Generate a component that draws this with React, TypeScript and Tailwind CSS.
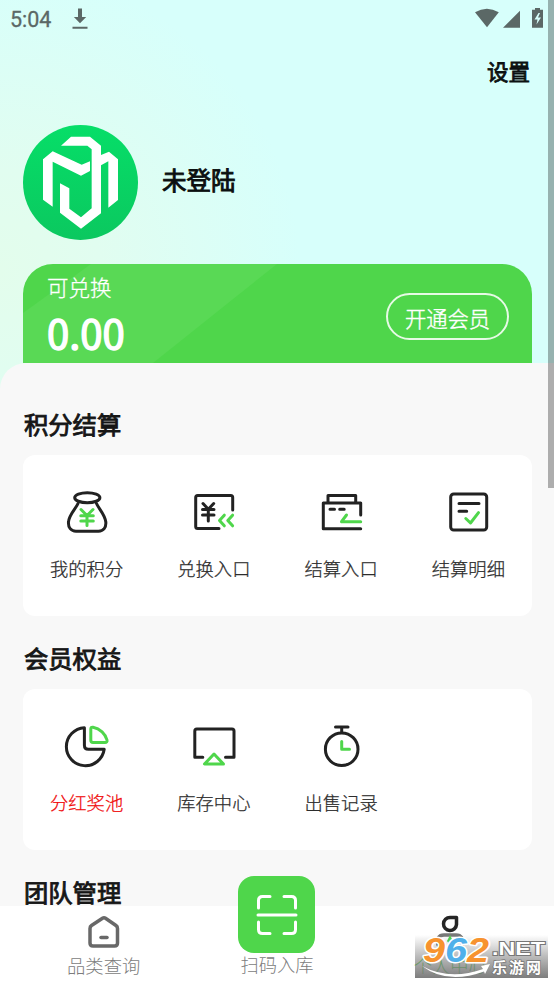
import type { ReactNode } from "react";

const DARK = "#222222";
const GREEN = "#4fd64b";

type Entry = {
  label: string;
  icon: ReactNode;
  highlight?: boolean;
};

function Icon({ children }: { children: ReactNode }) {
  return (
    <svg
      viewBox="0 0 48 48"
      fill="none"
      stroke={DARK}
      strokeWidth="3"
      strokeLinecap="round"
      strokeLinejoin="round"
      className="size-12"
    >
      {children}
    </svg>
  );
}

const pointEntries: Entry[] = [
  {
    label: "我的积分",
    icon: (
      <Icon>
        <ellipse cx="24.3" cy="9.7" rx="12.6" ry="5" />
        <path d="M15 15.5C13 20.5 6 26.5 5.5 34C5 39.5 8 43.2 13 43.2H35.5C40.5 43.2 43.3 39.5 42.8 34C42 26.5 35.5 20.5 33.5 15.5" />
        <path
          stroke={GREEN}
          d="M18 21.5L24 27.5L30 21.5M24 27.5V37.5M17.8 27.7H30.3M17.8 33H30.3"
        />
      </Icon>
    ),
  },
  {
    label: "兑换入口",
    icon: (
      <Icon>
        <path d="M42.7 22V9.5Q42.7 7.5 40.7 7.5H7.7Q5.7 7.5 5.7 9.5V38.5Q5.7 40.5 7.7 40.5H29" />
        <path d="M13 15.5L18.3 21.2L23.7 15.5M18.3 21.2V33M12.5 21.5H24M12.5 27H24" />
        <path
          stroke={GREEN}
          d="M34.3 27.2L29.5 32.5L34.3 37.8M42.6 27.2L37.8 32.5L42.6 37.8"
        />
      </Icon>
    ),
  },
  {
    label: "结算入口",
    icon: (
      <Icon>
        <path d="M11 14.5V7.4H38.7V14.5M43.7 27V15H6.3V40.7H43.7M13 21.2H17.5M22.7 21.2H27.2" />
        <path stroke={GREEN} d="M29.5 27L24.5 33.7H43.7" />
      </Icon>
    ),
  },
  {
    label: "结算明细",
    icon: (
      <Icon>
        <rect x="6.7" y="6" width="36" height="36" rx="3" />
        <path d="M15 15.4H35M15 23.3H22.7" />
        <path stroke={GREEN} d="M21.8 30.5L26.5 35L34.5 24.7" />
      </Icon>
    ),
  },
];

const memberEntries: Entry[] = [
  {
    label: "分红奖池",
    highlight: true,
    icon: (
      <Icon>
        <path d="M21.4 5.7A19 19 0 1 0 41.2 27.3H25.4Q21.4 27.3 21.4 23.3Z" />
        <path
          stroke={GREEN}
          d="M27.8 7Q27.8 4.8 30 5.2C37 6.5 42.5 12 44 18Q44.5 20.5 42 20.5H30Q27.8 20.5 27.8 18.3Z"
        />
      </Icon>
    ),
  },
  {
    label: "库存中心",
    icon: (
      <Icon>
        <path d="M12.8 35.2H4.8V9Q4.8 7 6.8 7H42Q44 7 44 9V35.2H35.5" />
        <path stroke={GREEN} d="M24 32L14.5 42H33.5Z" />
      </Icon>
    ),
  },
  {
    label: "出售记录",
    icon: (
      <Icon>
        <circle cx="24.7" cy="27.2" r="16.3" />
        <path d="M18.5 5H31M24.7 5V10.5" />
        <path stroke={GREEN} d="M24.7 19.5V27.2H32.5" />
      </Icon>
    ),
  },
];

function Section({ title, entries }: { title: string; entries: Entry[] }) {
  return (
    <section>
      <h2 className="h-[92px] pl-px pt-[43px] text-[24.3px] font-normal leading-9 text-[#161616] [-webkit-text-stroke:0.9px_#161616]">
        {title}
      </h2>
      <div className="grid h-[161px] grid-cols-4 rounded-xl bg-white">
        {entries.map((entry) => (
          <button
            key={entry.label}
            type="button"
            className="flex flex-col items-center pt-[33px]"
          >
            {entry.icon}
            <span
              className={`mt-[18px] whitespace-nowrap text-[18.3px] font-light leading-7 [-webkit-text-stroke:0.25px_currentColor] ${
                entry.highlight ? "text-[#f00a0a]" : "text-[#2c2c2c]"
              }`}
            >
              {entry.label}
            </span>
          </button>
        ))}
      </div>
    </section>
  );
}

function StatusBar() {
  return (
    <div className="flex h-[38px] items-center pl-[10px] pr-[9px] text-[#5b6866]">
      <span className="pt-[2px] font-['Roboto'] text-[21.5px] [-webkit-text-stroke:0.3px_#5b6866]">
        5:04
      </span>
      <svg viewBox="0 0 16 22" fill="currentColor" className="ml-[21px] h-[22px] w-4">
        <path d="M6 .5h4v8.500h4.200L8 15.200 1.900 9H6zM.5 18.700h15v2H.5z" />
      </svg>
      <svg
        viewBox="0 0 70 22"
        fill="currentColor"
        className="ml-auto h-[22px] w-[70px]"
      >
        <path d="M0 4.300Q11.800-3 23.800 4.300L12 19.200z" />
        <path d="M45 2.800V19.700H28z" />
        <path
          d="M60 0h5v1.800h3V19.700H57V1.800h3zM63.500 5L59.500 11.500h3l-1 5 4.500-7h-3l2-4.500z"
          fillRule="evenodd"
        />
      </svg>
    </div>
  );
}

function Avatar() {
  return (
    <svg viewBox="69 43 345 345" className="size-[115px]">
      <defs>
        <linearGradient id="avatar" x1="0" y1="0" x2="0" y2="1">
          <stop offset="0" stopColor="#06de68" />
          <stop offset="1" stopColor="#0bc85f" />
        </linearGradient>
      </defs>
      <circle cx="241.5" cy="215.5" r="172.5" fill="url(#avatar)" />
      <path
        fill="#fff"
        d="M183 105L213 78H270L303 105V133L327 123L354 146V268L325 291V152L303 164V308L243 354L180 306V218L208 233V294L243 320L275 293V116L262 105Z"
      />
      <path
        fill="#fff"
        d="M129 146L158 122L245 162L270 152V181L243 195L158 153V288L129 267Z"
      />
    </svg>
  );
}

function Balance() {
  return (
    <div className="relative ml-[23px] mr-[22px] flex h-[99px] overflow-hidden rounded-t-[30px] bg-[#4fd64b] text-white">
      <svg viewBox="0 0 509 99" className="absolute inset-0 h-[99px] w-[509px]">
        <path d="M0 49L68 0H254L130 99H0Z" fill="#59d955" />
      </svg>
      <div className="relative pl-6">
        <p className="mt-[7px] text-[21.5px] font-light leading-8 [-webkit-text-stroke:0.3px_white]">
          可兑换
        </p>
        <p className="mt-[4px] text-[40px] leading-[50px] [-webkit-text-stroke:1.4px_white]">
          0.00
        </p>
      </div>
      <button
        type="button"
        className="relative ml-auto mr-[23px] mt-[29px] h-[47px] w-[123px] rounded-full border-2 border-[#e6fae5] pt-px text-[21.3px] font-light leading-[43px] [-webkit-text-stroke:0.4px_white]"
      >
        开通会员
      </button>
    </div>
  );
}

function Watermark() {
  return (
    <svg
      viewBox="0 0 133 43"
      className="absolute bottom-[6px] left-[415px] h-[43px] w-[133px]"
    >
      <defs>
        <linearGradient id="shade" x1="0" y1="0" x2="0" y2="1">
          <stop offset="0" stopColor="#777" stopOpacity="0" />
          <stop offset="0.5" stopColor="#777" stopOpacity="0.5" />
          <stop offset="1" stopColor="#777" stopOpacity="0.95" />
        </linearGradient>
      </defs>
      <rect width="133" height="43" fill="url(#shade)" />
      <path
        d="M7 31Q35 46 68 34L66 31L75 29L70 39L69 36.500Q32 50 7 31Z"
        fill="#fff"
      />
      <text
        x="8"
        y="27"
        fontFamily="Liberation Sans, sans-serif"
        fontWeight="bold"
        fontStyle="italic"
        fontSize="35"
        textLength="66"
        lengthAdjust="spacingAndGlyphs"
        stroke="#fff"
        strokeWidth="3"
        strokeLinejoin="round"
        paintOrder="stroke"
      >
        <tspan fill="#f7932e">9</tspan>
        <tspan fill="#4fb0ea">6</tspan>
        <tspan fill="#f7932e">2</tspan>
      </text>
      <text
        x="77"
        y="20"
        fontFamily="Liberation Sans, sans-serif"
        fontWeight="bold"
        fontSize="19"
        textLength="53"
        lengthAdjust="spacingAndGlyphs"
        fill="#fff"
        stroke="#777"
        strokeWidth="2"
        paintOrder="stroke"
      >
        .NET
      </text>
      <text
        x="77"
        y="38"
        fontWeight="bold"
        fontSize="15"
        textLength="49"
        fill="#fff"
        stroke="#777"
        strokeWidth="1.5"
        paintOrder="stroke"
      >
        乐游网
      </text>
    </svg>
  );
}

function TabBar() {
  return (
    <nav className="relative z-10 grid h-[78px] grid-cols-3 bg-white px-[17px] text-[18.3px] font-light leading-7 text-[#7c7c7c]">
      <button type="button" className="flex flex-col items-center pt-[8px]">
        <svg
          viewBox="0 0 34 36"
          fill="none"
          stroke="#686868"
          strokeWidth="3.5"
          strokeLinecap="round"
          strokeLinejoin="round"
          className="h-9 w-[34px]"
        >
          <path d="M15.500 4.200Q17 3.200 18.500 4.200L29 11.500Q30.500 12.500 30.500 14.500V29Q30.500 32 27.500 32H6Q3 32 3 29V14.500Q3 12.500 4.500 11.500Z" />
          <path d="M14 23.500H20" />
        </svg>
        <span className="mt-px">品类查询</span>
      </button>
      <button type="button" className="-mt-[30px] flex flex-col items-center">
        <span className="flex size-[77px] shrink-0 items-center justify-center rounded-2xl bg-[#4fd64b]">
          <svg
            viewBox="0 0 42 42"
            fill="none"
            stroke="#fff"
            strokeWidth="3"
            strokeLinecap="round"
            className="size-[42px]"
          >
            <path d="M2.500 14V6.500Q2.500 2.500 6.500 2.500H14M28 2.500H35.500Q39.500 2.500 39.500 6.500V14M39.500 28V35.500Q39.500 39.500 35.500 39.500H28M14 39.500H6.500Q2.500 39.500 2.500 35.500V28M2 21H40" />
          </svg>
        </span>
        <span className="-mt-[3px]">扫码入库</span>
      </button>
      <button
        type="button"
        className="flex flex-col items-center pt-[8px] text-[#4fd64b]"
      >
        <svg viewBox="0 0 34 36" fill="none" className="h-9 w-[34px]">
          <path
            d="M17 3.500H23.500V10.500A6.500 6.500 0 1 1 17 3.500Z"
            stroke="#252525"
            strokeWidth="3.5"
            strokeLinejoin="round"
          />
          <path
            d="M5 31Q3 21 11 21H23Q31 21 29 31"
            stroke="#777"
            strokeWidth="3.5"
            strokeLinecap="round"
          />
          <path d="M17 21L14 27L17 31L20 27Z" fill="#4fd64b" />
        </svg>
        <span className="mt-px">个人中心</span>
      </button>
    </nav>
  );
}

export default function App() {
  return (
    <div className="relative flex h-[984px] w-[554px] flex-col overflow-hidden bg-[radial-gradient(circle_at_0_270px,#e3fdec_0,#e1fdf0_100px,#d7fffb_300px)] font-['Noto_Sans_CJK_SC',sans-serif]">
      <StatusBar />
      <header className="h-[226px] shrink-0">
        <div className="flex h-[68px] items-center justify-end pb-[2px] pr-6 text-[21.5px] text-[#0c1111] [-webkit-text-stroke:0.8px_#0c1111]">
          设置
        </div>
        <div className="mt-[18.5px] flex items-center pl-[23px]">
          <Avatar />
          <span className="ml-6 pb-[3px] text-[24.5px] text-[#0b1010] [-webkit-text-stroke:0.9px_#0b1010]">
            未登陆
          </span>
        </div>
      </header>
      <Balance />
      <main className="min-h-0 flex-1 overflow-hidden rounded-tl-[26px] bg-[#f8f8f8] pl-[23px] pr-[22px]">
        <Section title="积分结算" entries={pointEntries} />
        <div className="-mt-[19px]">
          <Section title="会员权益" entries={memberEntries} />
        </div>
        <h2 className="pl-px pt-[24px] text-[24.3px] font-normal leading-9 text-[#161616] [-webkit-text-stroke:0.9px_#161616]">
          团队管理
        </h2>
      </main>
      <TabBar />
      <div className="absolute right-0 top-0 z-20 h-[488px] w-[6px] bg-black/30" />
      <div className="absolute inset-x-0 bottom-0 z-20">
        <Watermark />
      </div>
    </div>
  );
}
